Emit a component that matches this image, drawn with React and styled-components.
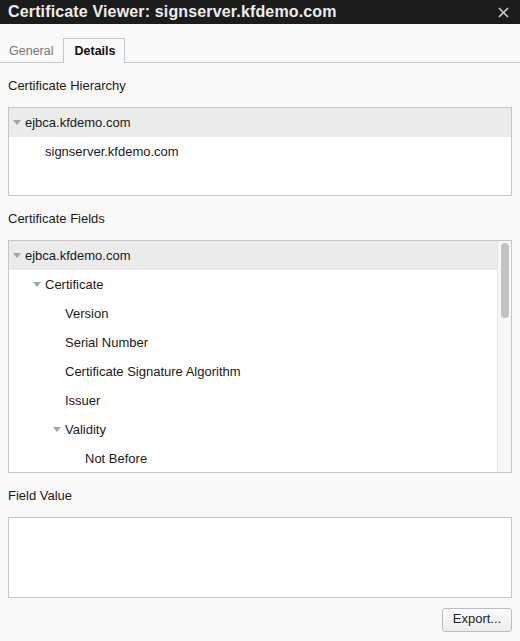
import React from "react";
import styled, { createGlobalStyle } from "styled-components";

const Global = createGlobalStyle`
  html, body { margin: 0; padding: 0; background: #f9f9f9; }
  body { font-family: "Liberation Sans", Arial, Helvetica, sans-serif; }
`;

const Window = styled.div`
  width: 520px;
  height: 641px;
  background: #f9f9f9;
  display: flex;
  flex-direction: column;
  overflow: hidden;
`;

const TitleBar = styled.div`
  height: 24px;
  background: #1c1c1c;
  display: flex;
  align-items: center;
  justify-content: space-between;
  padding: 0 11px 0 8px;
  flex-shrink: 0;
`;

const Title = styled.div`
  color: #ececec;
  font-size: 16px;
  font-weight: bold;
  letter-spacing: 0.15px;
`;

const CloseButton = styled.button`
  border: none;
  background: none;
  padding: 0;
  width: 12px;
  height: 12px;
  display: flex;
  align-items: center;
  justify-content: center;
`;

const TabBar = styled.div`
  margin-top: 14px;
  height: 24px;
  border-bottom: 1px solid #c6c6c6;
  display: flex;
  align-items: flex-end;
`;

const Tab = styled.div`
  box-sizing: border-box;
  display: flex;
  align-items: center;
  font-size: 12.5px;
  color: ${(p) => (p.$active ? "#111" : "#777")};
  font-weight: ${(p) => (p.$active ? "bold" : "normal")};
  padding: ${(p) => (p.$active ? "0 9px 1px 10px" : "0 9px 0 8px")};
  border: 1px solid ${(p) => (p.$active ? "#c6c6c6" : "transparent")};
  border-bottom: none;
  background: #f9f9f9;
  margin-bottom: ${(p) => (p.$active ? "-1px" : "0")};
  height: ${(p) => (p.$active ? "25px" : "24px")};
`;

const Content = styled.div`
  padding: 0 8px;
  display: flex;
  flex-direction: column;
`;

const Label = styled.div`
  font-size: 13px;
  line-height: 16px;
  color: #1a1a1a;
  margin: ${(p) => p.$mt}px 0 ${(p) => p.$mb}px 0;
`;

const Box = styled.div`
  border: 1px solid #c6c6c6;
  background: #fff;
  height: ${(p) => p.$h}px;
  box-sizing: border-box;
  position: relative;
  overflow: hidden;
  display: flex;
`;

const Rows = styled.div`
  flex: 1;
  display: flex;
  flex-direction: column;
`;

const Row = styled.div`
  height: 29px;
  flex-shrink: 0;
  display: flex;
  align-items: center;
  font-size: 13px;
  color: #1a1a1a;
  background: ${(p) => (p.$selected ? "#ebebeb" : "transparent")};
  padding-left: ${(p) => 4 + p.$level * 20}px;
`;

const Twisty = styled.span`
  width: 12px;
  flex-shrink: 0;
  display: flex;
  align-items: center;
`;

const ScrollTrack = styled.div`
  width: 14px;
  flex-shrink: 0;
  background: #f7f7f7;
  border-left: 1px solid #e4e4e4;
  display: flex;
  justify-content: center;
  padding-top: 2px;
  box-sizing: border-box;
`;

const ScrollThumb = styled.div`
  width: 8px;
  height: 75px;
  border-radius: 4px;
  background: #c2c2c2;
`;

const Footer = styled.div`
  display: flex;
  justify-content: flex-end;
  margin-top: 10px;
`;

const Button = styled.button`
  width: 70px;
  height: 24px;
  font-family: "Liberation Sans", Arial, sans-serif;
  font-size: 13px;
  line-height: 20px;
  color: #222;
  border: 1px solid #bdbdbd;
  border-radius: 3px;
  background: linear-gradient(#fbfbfb, #ececec);
  padding: 0 0 2px;
`;

const Triangle = () => (
  <svg width="8" height="5" viewBox="0 0 8 5">
    <path d="M0 0 L8 0 L4 5 Z" fill="#a3a3a3" />
  </svg>
);

const Node = ({ level, open, selected, children }) => (
  <Row $level={level} $selected={selected}>
    <Twisty>{open ? <Triangle /> : null}</Twisty>
    <span>{children}</span>
  </Row>
);

export default function App() {
  return (
    <Window>
      <Global />
      <TitleBar>
        <Title>Certificate Viewer: signserver.kfdemo.com</Title>
        <CloseButton aria-label="Close">
          <svg width="11" height="11" viewBox="0 0 11 11">
            <path d="M1 1 L10 10 M10 1 L1 10" stroke="#d0d0d0" strokeWidth="1.6" />
          </svg>
        </CloseButton>
      </TitleBar>
      <TabBar>
        <Tab>General</Tab>
        <Tab $active>Details</Tab>
      </TabBar>
      <Content>
        <Label $mt={15} $mb={13}>Certificate Hierarchy</Label>
        <Box $h={89}>
          <Rows>
            <Node level={0} open selected>ejbca.kfdemo.com</Node>
            <Node level={1}>signserver.kfdemo.com</Node>
          </Rows>
        </Box>
        <Label $mt={15} $mb={13}>Certificate Fields</Label>
        <Box $h={233}>
          <Rows>
            <Node level={0} open selected>ejbca.kfdemo.com</Node>
            <Node level={1} open>Certificate</Node>
            <Node level={2}>Version</Node>
            <Node level={2}>Serial Number</Node>
            <Node level={2}>Certificate Signature Algorithm</Node>
            <Node level={2}>Issuer</Node>
            <Node level={2} open>Validity</Node>
            <Node level={3}>Not Before</Node>
          </Rows>
          <ScrollTrack>
            <ScrollThumb />
          </ScrollTrack>
        </Box>
        <Label $mt={15} $mb={13}>Field Value</Label>
        <Box $h={81} />
        <Footer>
          <Button>Export...</Button>
        </Footer>
      </Content>
    </Window>
  );
}
